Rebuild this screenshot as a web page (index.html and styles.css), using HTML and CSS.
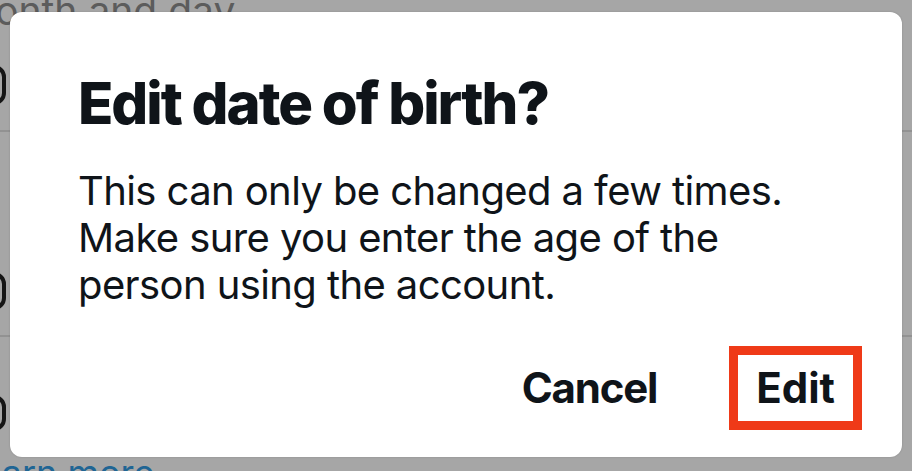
FILE: index.html
```html
<!DOCTYPE html>
<html lang="en">
<head>
<meta charset="utf-8">
<title>Edit date of birth?</title>
<link rel="stylesheet" href="styles.css">
</head>
<body>
<div class="page">
  <div class="bg-title">month and day</div>
  <div class="bg-field"></div>
  <div class="bg-divider first"></div>
  <div class="bg-label">Day</div>
  <div class="bg-field second"></div>
  <div class="bg-divider"></div>
  <div class="bg-field third"></div>
  <div class="bg-link">Learn more</div>
</div>

<div class="dialog" role="dialog" aria-labelledby="dlg-title">
  <h1 class="dialog-title" id="dlg-title">Edit date of birth?</h1>
  <p class="dialog-text">This can only be changed a few times.<br>Make sure you enter the age of the<br>person using the account.</p>
  <div class="dialog-actions">
    <button class="btn btn-cancel">Cancel</button>
    <button class="btn btn-edit">Edit</button>
  </div>
</div>
</body>
</html>
```

FILE: styles.css
```css
html, body {
  margin: 0;
  padding: 0;
}

body {
  width: 912px;
  height: 471px;
  overflow: hidden;
  position: relative;
  background: #a6a6a6;
  font-family: Inter, "Noto Sans", "Liberation Sans", sans-serif;
  color: #0f1419;
}

/* dimmed page behind the dialog */
.page {
  display: flex;
  flex-direction: column;
  width: 912px;
  height: 471px;
  overflow: hidden;
}

.bg-title {
  font-size: 39px;
  line-height: 48px;
  color: #5c5c5c;
  margin: -13px 0 0 -39px;
  white-space: nowrap;
  flex: none;
}

.bg-field {
  flex: none;
  margin-top: 30px;
  margin-left: -32px;
  width: 30px;
  height: 32px;
  border: 4px solid #151515;
  border-radius: 12px;
}

.bg-field.second {
  margin-top: 36px;
  height: 30px;
}

.bg-field.third {
  margin-top: 58px;
  height: 28px;
}

.bg-divider {
  flex: none;
  margin-top: 25px;
  height: 2px;
  background: #929292;
}

.bg-label {
  flex: none;
  margin-top: 68px;
  margin-left: -58px;
  font-size: 30px;
  line-height: 36px;
  color: #6a6a6a;
  white-space: nowrap;
}

.bg-link {
  flex: none;
  margin-top: 22px;
  margin-left: -40px;
  font-size: 36px;
  line-height: 40px;
  color: #1f6594;
  white-space: nowrap;
}

/* dialog */
.dialog {
  position: absolute;
  left: 10px;
  top: 12px;
  width: 892px;
  height: 445px;
  box-sizing: border-box;
  padding: 57px 40px 0 68px;
  background: #ffffff;
  border-radius: 12px;
  box-shadow: 0 0 2px rgba(0, 0, 0, 0.18);
  display: flex;
  flex-direction: column;
}

.dialog-title {
  margin: 0;
  font-size: 58px;
  line-height: 68px;
  font-weight: 800;
  letter-spacing: -2px;
  color: #0f1419;
}

.dialog-text {
  margin: 30px 0 0;
  font-size: 40px;
  line-height: 47px;
  font-weight: 400;
  letter-spacing: -0.6px;
  color: #0f1419;
}

.dialog-actions {
  margin-top: 38px;
  display: flex;
  justify-content: flex-end;
  align-items: center;
  gap: 54px;
}

.btn {
  font-family: inherit;
  font-size: 42px;
  line-height: 48px;
  font-weight: 700;
  color: #0f1419;
  background: transparent;
  border: 0;
  padding: 0;
  cursor: pointer;
}

.btn-cancel {
  padding: 18px;
  letter-spacing: -1.2px;
}

.btn-edit {
  border: 9px solid #ef3a18;
  padding: 9px 18px;
}
```
